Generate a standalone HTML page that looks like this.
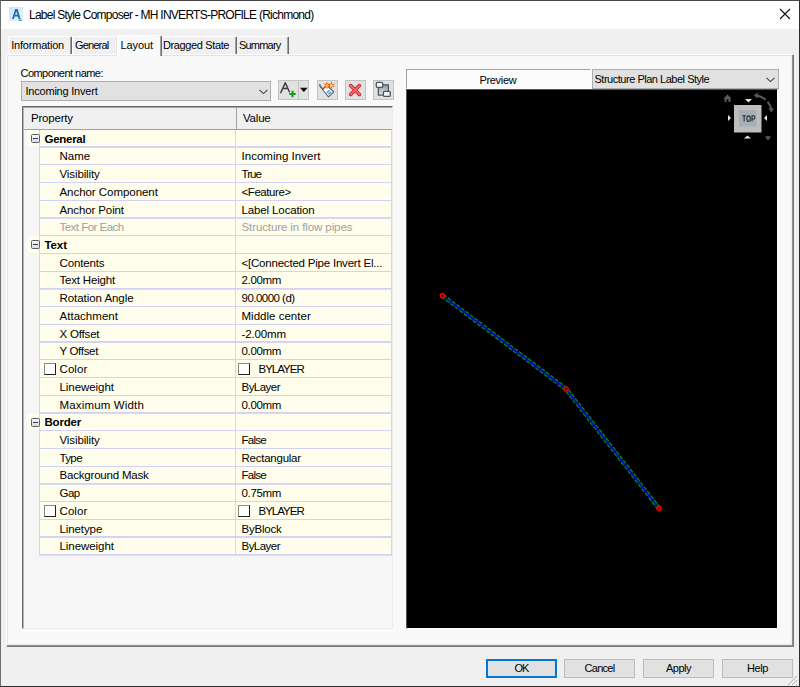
<!DOCTYPE html>
<html><head><meta charset="utf-8">
<style>
*{box-sizing:border-box;margin:0;padding:0}
html,body{width:800px;height:687px;overflow:hidden;background:#f0f0f0;font-family:"Liberation Sans",sans-serif;font-size:11px;color:#000}
.abs{position:absolute}
#win{position:absolute;left:0;top:0;width:800px;height:687px;background:#f0f0f0;overflow:hidden}
#frame{position:absolute;left:0;top:0;width:800px;height:687px;border:1px solid #2c2c2c;border-left-color:#6e6e6e;border-top-color:#484848;z-index:50;pointer-events:none}
#title{position:absolute;left:1px;top:1px;width:798px;height:28px;background:#fff}
.lbl{position:absolute;white-space:nowrap;line-height:14px;font-size:11px}
.txt{position:absolute;white-space:nowrap;line-height:14px;font-size:11.5px}
.txt.b{font-weight:bold}
.txt.dis{color:#a0a0a0}
.tab{position:absolute;top:36px;height:18px;background:#f0f0f0;border-left:1px solid #fff;border-top:1px solid #fff;border-right:1px solid #696969;box-shadow:inset -1px 0 #a0a0a0;border-radius:2px 2px 0 0;white-space:nowrap}
.tab span{position:absolute;top:1px;line-height:14px}
.tab.sel{top:35px;height:21px;background:#fafafa;z-index:3;box-shadow:inset -1px 0 #a0a0a0}
#panel{position:absolute;left:6px;top:54px;width:788px;height:593px;background:#f9f9f9;border-left:1px solid #fff;border-top:1px solid #fff;border-right:1px solid #7a7a7a;border-bottom:1px solid #7a7a7a;box-shadow:inset -1px -1px #8e8e8e, inset -3px -3px 2px -1px #ececec, inset 1px 1px #e3e3e3}
.combo{position:absolute;background:#e1e1e1;border:1px solid #adadad}
.tbtn{position:absolute;top:80px;height:20px;background:#e1e1e1;border:1px solid #c3c3c3}
.mbox{position:absolute;z-index:2;left:31px;width:9px;height:9px;border:1px solid #5a5f66;border-radius:1.5px;background:linear-gradient(#f4f4f8,#dcdde4)}
.mbox::after{content:"";position:absolute;left:1px;top:3px;width:5px;height:1px;background:#3a3a3a}
.cb{position:absolute;z-index:2;width:12px;height:12px;background:#fff;border:1px solid #222;border-top-color:#8a8a8a;border-left-color:#8a8a8a}
.btn{position:absolute;top:659px;height:19px;width:71px;background:#e1e1e1;border:1px solid #bcbcbc;text-align:center;line-height:16px;font-size:11px}
.btn.def{border:2px solid #0078d7;line-height:14px}
</style></head><body>
<div id="win">
 <div id="title">
  <svg class="abs" style="left:7px;top:5px" width="16" height="16" viewBox="0 0 16 16">
   <defs><linearGradient id="ig" x1="0" y1="0" x2="1" y2="1"><stop offset="0" stop-color="#cfe2f3"/><stop offset="1" stop-color="#eaf3fb"/></linearGradient></defs>
   <rect x="1" y="1" width="14" height="14" fill="url(#ig)"/>
   <path d="M4 13 L7.2 3 L9.6 3 L12.6 13 L10.6 13 L9.9 10.6 L6.6 10.6 L5.9 13 Z M7.1 8.8 L9.4 8.8 L8.3 5.2 Z" fill="#1f6fae"/>
   <rect x="10.5" y="13.6" width="3.5" height="1.2" fill="#2f8ad6"/>
  </svg>
  <div class="abs" style="left:28px;top:7px;font-size:12px;line-height:14px;white-space:nowrap;letter-spacing:-0.745px">Label Style Composer - MH INVERTS-PROFILE (Richmond)</div>
  <svg class="abs" style="left:778px;top:7px" width="12" height="12" viewBox="0 0 12 12"><path d="M1 1 L11 11 M11 1 L1 11" stroke="#111" stroke-width="1.1"/></svg>
 </div>

 <div class="tab" style="left:8px;width:64px"><span style="left:2.2px;letter-spacing:-0.2px">Information</span></div>
 <div class="tab" style="left:72px;width:45px;border-right:1px solid #e3e3e3;box-shadow:none"><span style="left:2px;letter-spacing:-0.833px">General</span></div>
 <div class="tab" style="left:236px;width:53px"><span style="left:2px;letter-spacing:-0.8px">Summary</span></div>
 <div class="tab" style="left:161px;width:76px"><span style="left:1px;letter-spacing:-0.375px">Dragged State</span></div>
 <div id="panel"></div>
 <div class="tab sel" style="left:117px;width:45px"><span style="left:2.5px;top:2px;letter-spacing:-0.1px">Layout</span></div>

 <div class="lbl" style="left:20.5px;top:66px;letter-spacing:-0.536px">Component name:</div>
 <div class="combo" style="left:21px;top:81px;width:250px;height:20px"><span class="lbl" style="left:3.5px;top:2px;letter-spacing:-0.214px">Incoming Invert</span>
  <svg class="abs" style="left:237px;top:7px" width="9" height="6" viewBox="0 0 9 6"><path d="M0.5 0.8 L4.5 4.6 L8.5 0.8" fill="none" stroke="#444" stroke-width="1.1"/></svg>
 </div>
 <div class="tbtn" style="left:278px;width:31px"><div class="abs" style="left:19px;top:0;width:1px;height:18px;background:#c3c3c3"></div></div>
 <div class="tbtn" style="left:317px;width:21px"></div>
 <div class="tbtn" style="left:345px;width:21px"></div>
 <div class="tbtn" style="left:373px;width:21px"></div>
 <svg class="abs" style="left:276px;top:78px" width="120" height="24" viewBox="276 78 120 24">
  <path d="M280.8 92.6 L285.3 82.8 L289.3 91.8 M283 88.6 L288 88.6" fill="none" stroke="#3a3f48" stroke-width="1.5" stroke-linecap="round" stroke-linejoin="round"/>
  <path d="M292.5 90.8 L292.5 97.2 M289.3 94 L295.7 94" stroke="#0f9f0f" stroke-width="2"/>
  <path d="M300 87.8 L307.6 87.8 L303.8 92 Z" fill="#000"/>
  <!-- tag -->
  <path d="M322.5 89.5 L327 85.5 L333.8 91.8 L328.5 96.8 Z" fill="#fbfdff" stroke="#5a6068" stroke-width="1.1" stroke-linejoin="round"/>
  <path d="M319.8 84.3 Q319.8 87.5 323.5 89" fill="none" stroke="#5f6670" stroke-width="1.6"/>
  <path d="M326.8 92.8 L329.4 90.4 M328.4 94.3 L331 91.9" stroke="#3b8ee0" stroke-width="1.4"/>
  <g fill="#f04a1a">
   <path d="M327 81.6 L327.9 84.3 L330.7 83.6 L328.6 85.4 L330.7 87.2 L327.9 86.5 L327 89.2 L326.1 86.5 L323.3 87.2 L325.4 85.4 L323.3 83.6 L326.1 84.3 Z"/>
   <path d="M331.4 81.6 L332.3 84.3 L335.1 83.6 L333 85.4 L335.1 87.2 L332.3 86.5 L331.4 89.2 L330.5 86.5 L327.7 87.2 L329.8 85.4 L327.7 83.6 L330.5 84.3 Z"/>
  </g>
  <circle cx="327" cy="85.4" r="1.5" fill="#ffc832"/>
  <circle cx="331.4" cy="85.4" r="1.5" fill="#ffd84a"/>
  <!-- red x -->
  <path d="M350.6 85.6 L359.4 94.4 M359.4 85.6 L350.6 94.4" stroke="#c42222" stroke-width="3.6" stroke-linecap="round"/>
  <path d="M350.6 85.6 L359.4 94.4 M359.4 85.6 L350.6 94.4" stroke="#f46a6a" stroke-width="2" stroke-linecap="round"/>
  <!-- layout icon -->
  <defs><linearGradient id="lg" x1="0" y1="0" x2="0" y2="1"><stop offset="0" stop-color="#8f99a6"/><stop offset="1" stop-color="#e2e6ec"/></linearGradient></defs>
  <rect x="378.5" y="84.8" width="10" height="10.4" fill="url(#lg)"/>
  <path d="M382.5 84.8 L388.4 84.8 L388.4 91.5 M378.4 87.5 L378.4 95.2 L383.5 95.2" fill="none" stroke="#50565e" stroke-width="1.3"/>
  <rect x="376.3" y="82.4" width="6.4" height="5" rx="1.2" fill="#f3f6fa" stroke="#50565e" stroke-width="1.3"/>
  <rect x="383.4" y="91.4" width="6.9" height="5" rx="1.2" fill="#f3f6fa" stroke="#50565e" stroke-width="1.3"/>
 </svg>

 <!-- property grid -->
 <div class="abs" style="left:22px;top:106px;width:371px;height:523px;background:#f6f6f6;border-left:1px solid #696969;border-top:1px solid #696969;border-right:1px solid #ececec;border-bottom:1px solid #ececec"></div>
 <div class="abs" style="left:23px;top:107px;width:369px;height:22px;background:#f0f0f0"></div>
 <div class="abs" style="left:23px;top:129px;width:369px;height:1px;background:#a0a0a0"></div>
 <div class="abs" style="left:23px;top:107px;width:369px;height:1px;background:#a8a8a8"></div>
 <div class="abs" style="left:23px;top:107px;width:1px;height:521px;background:#b4b4b4"></div>
 <div class="abs" style="left:236px;top:107px;width:1px;height:22px;background:#a0a0a0"></div>
 <span class="txt" style="left:31px;top:111px;letter-spacing:-0.2px">Property</span>
 <span class="txt" style="left:243px;top:111px;letter-spacing:-0.2px">Value</span>
<div class="abs" style="left:27px;top:130.00px;width:364px;height:16.00px;background:#fffeec"></div>
<div class="mbox" style="top:134.00px"></div>
<span class="txt b" style="left:44.5px;top:131.60px;letter-spacing:-0.283px">General</span>
<div class="abs" style="left:39px;top:146px;width:353px;height:1px;background:#d2d2f6"></div>
<div class="abs" style="left:39px;top:147px;width:353px;height:1px;background:rgba(210,210,246,0.90)"></div>
<div class="abs" style="left:40px;top:147.73px;width:351px;height:16.27px;background:#fffeec"></div>
<span class="txt" style="left:59.5px;top:149.33px;letter-spacing:0.0px">Name</span>
<span class="txt" style="left:241.5px;top:149.33px;letter-spacing:0.029px">Incoming Invert</span>
<div class="abs" style="left:39px;top:164px;width:353px;height:1px;background:#d2d2f6"></div>
<div class="abs" style="left:39px;top:165px;width:353px;height:1px;background:rgba(210,210,246,0.63)"></div>
<div class="abs" style="left:40px;top:165.46px;width:351px;height:16.54px;background:#fffeec"></div>
<span class="txt" style="left:59.5px;top:167.06px;letter-spacing:-0.111px">Visibility</span>
<span class="txt" style="left:241.5px;top:167.06px;letter-spacing:-0.933px">True</span>
<div class="abs" style="left:39px;top:182px;width:353px;height:1px;background:#d2d2f6"></div>
<div class="abs" style="left:39px;top:183px;width:353px;height:1px;background:rgba(210,210,246,0.36)"></div>
<div class="abs" style="left:40px;top:183.19px;width:351px;height:16.81px;background:#fffeec"></div>
<span class="txt" style="left:59.5px;top:184.79px;letter-spacing:-0.047px">Anchor Component</span>
<span class="txt" style="left:241.5px;top:184.79px;letter-spacing:-0.425px">&lt;Feature&gt;</span>
<div class="abs" style="left:39px;top:200px;width:353px;height:1px;background:#d2d2f6"></div>
<div class="abs" style="left:39px;top:201px;width:353px;height:1px;background:rgba(210,210,246,0.09)"></div>
<div class="abs" style="left:40px;top:200.92px;width:351px;height:16.08px;background:#fffeec"></div>
<span class="txt" style="left:59.5px;top:202.52px;letter-spacing:-0.118px">Anchor Point</span>
<span class="txt" style="left:241.5px;top:202.52px;letter-spacing:-0.123px">Label Location</span>
<div class="abs" style="left:39px;top:217px;width:353px;height:1px;background:#d2d2f6"></div>
<div class="abs" style="left:39px;top:218px;width:353px;height:1px;background:rgba(210,210,246,0.82)"></div>
<div class="abs" style="left:40px;top:218.65px;width:351px;height:16.35px;background:#fffeec"></div>
<span class="txt dis" style="left:59.5px;top:220.25px;letter-spacing:-0.525px">Text For Each</span>
<span class="txt dis" style="left:241.5px;top:220.25px;letter-spacing:-0.1px">Structure in flow pipes</span>
<div class="abs" style="left:39px;top:235px;width:353px;height:1px;background:#d2d2f6"></div>
<div class="abs" style="left:39px;top:236px;width:353px;height:1px;background:rgba(210,210,246,0.55)"></div>
<div class="abs" style="left:27px;top:236.38px;width:364px;height:16.62px;background:#fffeec"></div>
<div class="mbox" style="top:240.38px"></div>
<span class="txt b" style="left:44.5px;top:237.98px;letter-spacing:-0.1px">Text</span>
<div class="abs" style="left:39px;top:253px;width:353px;height:1px;background:#d2d2f6"></div>
<div class="abs" style="left:39px;top:254px;width:353px;height:1px;background:rgba(210,210,246,0.28)"></div>
<div class="abs" style="left:40px;top:254.11px;width:351px;height:16.89px;background:#fffeec"></div>
<span class="txt" style="left:59.5px;top:255.71px;letter-spacing:-0.157px">Contents</span>
<span class="txt" style="left:241.5px;top:255.71px;letter-spacing:-0.207px">&lt;[Connected Pipe Invert El...</span>
<div class="abs" style="left:39px;top:271px;width:353px;height:1px;background:#d2d2f6"></div>
<div class="abs" style="left:39px;top:272px;width:353px;height:1px;background:rgba(210,210,246,0.01)"></div>
<div class="abs" style="left:40px;top:271.84px;width:351px;height:16.16px;background:#fffeec"></div>
<span class="txt" style="left:59.5px;top:273.44px;letter-spacing:-0.19px">Text Height</span>
<span class="txt" style="left:241.5px;top:273.44px;letter-spacing:-0.32px">2.00mm</span>
<div class="abs" style="left:39px;top:288px;width:353px;height:1px;background:#d2d2f6"></div>
<div class="abs" style="left:39px;top:289px;width:353px;height:1px;background:rgba(210,210,246,0.74)"></div>
<div class="abs" style="left:40px;top:289.57px;width:351px;height:16.43px;background:#fffeec"></div>
<span class="txt" style="left:59.5px;top:291.17px;letter-spacing:-0.054px">Rotation Angle</span>
<span class="txt" style="left:241.5px;top:291.17px;letter-spacing:-0.52px">90.0000 (d)</span>
<div class="abs" style="left:39px;top:306px;width:353px;height:1px;background:#d2d2f6"></div>
<div class="abs" style="left:39px;top:307px;width:353px;height:1px;background:rgba(210,210,246,0.47)"></div>
<div class="abs" style="left:40px;top:307.30px;width:351px;height:16.70px;background:#fffeec"></div>
<span class="txt" style="left:59.5px;top:308.90px;letter-spacing:0.033px">Attachment</span>
<span class="txt" style="left:241.5px;top:308.90px;letter-spacing:0.017px">Middle center</span>
<div class="abs" style="left:39px;top:324px;width:353px;height:1px;background:#d2d2f6"></div>
<div class="abs" style="left:39px;top:325px;width:353px;height:1px;background:rgba(210,210,246,0.20)"></div>
<div class="abs" style="left:40px;top:325.03px;width:351px;height:15.97px;background:#fffeec"></div>
<span class="txt" style="left:59.5px;top:326.63px;letter-spacing:-0.186px">X Offset</span>
<span class="txt" style="left:241.5px;top:326.63px;letter-spacing:-0.133px">-2.00mm</span>
<div class="abs" style="left:39px;top:341px;width:353px;height:1px;background:#d2d2f6"></div>
<div class="abs" style="left:39px;top:342px;width:353px;height:1px;background:rgba(210,210,246,0.93)"></div>
<div class="abs" style="left:40px;top:342.76px;width:351px;height:16.24px;background:#fffeec"></div>
<span class="txt" style="left:59.5px;top:344.36px;letter-spacing:-0.329px">Y Offset</span>
<span class="txt" style="left:241.5px;top:344.36px;letter-spacing:-0.32px">0.00mm</span>
<div class="abs" style="left:39px;top:359px;width:353px;height:1px;background:#d2d2f6"></div>
<div class="abs" style="left:39px;top:360px;width:353px;height:1px;background:rgba(210,210,246,0.66)"></div>
<div class="abs" style="left:40px;top:360.49px;width:351px;height:16.51px;background:#fffeec"></div>
<div class="cb" style="left:44px;top:362.74px"></div>
<div class="cb" style="left:238px;top:362.74px"></div>
<span class="txt" style="left:59.5px;top:362.09px;letter-spacing:0.075px">Color</span>
<span class="txt" style="left:258.5px;top:362.09px;letter-spacing:-1.0px">BYLAYER</span>
<div class="abs" style="left:39px;top:377px;width:353px;height:1px;background:#d2d2f6"></div>
<div class="abs" style="left:39px;top:378px;width:353px;height:1px;background:rgba(210,210,246,0.39)"></div>
<div class="abs" style="left:40px;top:378.22px;width:351px;height:16.78px;background:#fffeec"></div>
<span class="txt" style="left:59.5px;top:379.82px;letter-spacing:-0.056px">Lineweight</span>
<span class="txt" style="left:241.5px;top:379.82px;letter-spacing:-0.533px">ByLayer</span>
<div class="abs" style="left:39px;top:395px;width:353px;height:1px;background:#d2d2f6"></div>
<div class="abs" style="left:39px;top:396px;width:353px;height:1px;background:rgba(210,210,246,0.12)"></div>
<div class="abs" style="left:40px;top:395.95px;width:351px;height:16.05px;background:#fffeec"></div>
<span class="txt" style="left:59.5px;top:397.55px;letter-spacing:0.158px">Maximum Width</span>
<span class="txt" style="left:241.5px;top:397.55px;letter-spacing:-0.32px">0.00mm</span>
<div class="abs" style="left:39px;top:412px;width:353px;height:1px;background:#d2d2f6"></div>
<div class="abs" style="left:39px;top:413px;width:353px;height:1px;background:rgba(210,210,246,0.85)"></div>
<div class="abs" style="left:27px;top:413.68px;width:364px;height:16.32px;background:#fffeec"></div>
<div class="mbox" style="top:417.68px"></div>
<span class="txt b" style="left:44.5px;top:415.28px;letter-spacing:-0.18px">Border</span>
<div class="abs" style="left:39px;top:430px;width:353px;height:1px;background:#d2d2f6"></div>
<div class="abs" style="left:39px;top:431px;width:353px;height:1px;background:rgba(210,210,246,0.58)"></div>
<div class="abs" style="left:40px;top:431.41px;width:351px;height:16.59px;background:#fffeec"></div>
<span class="txt" style="left:59.5px;top:433.01px;letter-spacing:-0.111px">Visibility</span>
<span class="txt" style="left:241.5px;top:433.01px;letter-spacing:-0.75px">False</span>
<div class="abs" style="left:39px;top:448px;width:353px;height:1px;background:#d2d2f6"></div>
<div class="abs" style="left:39px;top:449px;width:353px;height:1px;background:rgba(210,210,246,0.31)"></div>
<div class="abs" style="left:40px;top:449.14px;width:351px;height:16.86px;background:#fffeec"></div>
<span class="txt" style="left:59.5px;top:450.74px;letter-spacing:-0.633px">Type</span>
<span class="txt" style="left:241.5px;top:450.74px;letter-spacing:-0.24px">Rectangular</span>
<div class="abs" style="left:39px;top:466px;width:353px;height:1px;background:#d2d2f6"></div>
<div class="abs" style="left:39px;top:467px;width:353px;height:1px;background:rgba(210,210,246,0.04)"></div>
<div class="abs" style="left:40px;top:466.87px;width:351px;height:16.13px;background:#fffeec"></div>
<span class="txt" style="left:59.5px;top:468.47px;letter-spacing:-0.193px">Background Mask</span>
<span class="txt" style="left:241.5px;top:468.47px;letter-spacing:-0.75px">False</span>
<div class="abs" style="left:39px;top:483px;width:353px;height:1px;background:#d2d2f6"></div>
<div class="abs" style="left:39px;top:484px;width:353px;height:1px;background:rgba(210,210,246,0.77)"></div>
<div class="abs" style="left:40px;top:484.60px;width:351px;height:16.40px;background:#fffeec"></div>
<span class="txt" style="left:59.5px;top:486.20px;letter-spacing:-0.55px">Gap</span>
<span class="txt" style="left:241.5px;top:486.20px;letter-spacing:-0.32px">0.75mm</span>
<div class="abs" style="left:39px;top:501px;width:353px;height:1px;background:#d2d2f6"></div>
<div class="abs" style="left:39px;top:502px;width:353px;height:1px;background:rgba(210,210,246,0.50)"></div>
<div class="abs" style="left:40px;top:502.33px;width:351px;height:16.67px;background:#fffeec"></div>
<div class="cb" style="left:44px;top:504.58px"></div>
<div class="cb" style="left:238px;top:504.58px"></div>
<span class="txt" style="left:59.5px;top:503.93px;letter-spacing:0.075px">Color</span>
<span class="txt" style="left:258.5px;top:503.93px;letter-spacing:-1.0px">BYLAYER</span>
<div class="abs" style="left:39px;top:519px;width:353px;height:1px;background:#d2d2f6"></div>
<div class="abs" style="left:39px;top:520px;width:353px;height:1px;background:rgba(210,210,246,0.23)"></div>
<div class="abs" style="left:40px;top:520.06px;width:351px;height:15.94px;background:#fffeec"></div>
<span class="txt" style="left:59.5px;top:521.66px;letter-spacing:-0.1px">Linetype</span>
<span class="txt" style="left:241.5px;top:521.66px;letter-spacing:-0.2px">ByBlock</span>
<div class="abs" style="left:39px;top:536px;width:353px;height:1px;background:#d2d2f6"></div>
<div class="abs" style="left:39px;top:537px;width:353px;height:1px;background:rgba(210,210,246,0.96)"></div>
<div class="abs" style="left:40px;top:537.79px;width:351px;height:16.21px;background:#fffeec"></div>
<span class="txt" style="left:59.5px;top:539.39px;letter-spacing:-0.056px">Lineweight</span>
<span class="txt" style="left:241.5px;top:539.39px;letter-spacing:-0.533px">ByLayer</span>
<div class="abs" style="left:39px;top:554px;width:353px;height:1px;background:#d2d2f6"></div>
<div class="abs" style="left:39px;top:555px;width:353px;height:1px;background:rgba(210,210,246,0.69)"></div>
<div class="abs" style="left:39px;top:130px;width:1px;height:426px;background:#ffc8c8"></div>
<div class="abs" style="left:235px;top:130px;width:1px;height:426px;background:#ffc8c8"></div>
<div class="abs" style="left:391px;top:130px;width:1px;height:426px;background:#ffc8c8"></div>

 <!-- preview -->
 <div class="abs" style="left:406px;top:69px;width:185px;height:20px;background:#fbfbfb;border-top:1px solid #a0a0a0;border-left:1px solid #a0a0a0;border-right:1px solid #fff;border-bottom:1px solid #fff"><span class="lbl" style="left:72.5px;top:3px;letter-spacing:-0.333px">Preview</span></div>
 <div class="combo" style="left:592px;top:69px;width:187px;height:20px"><span class="lbl" style="left:1.5px;top:2px;letter-spacing:-0.48px">Structure Plan Label Style</span>
  <svg class="abs" style="left:173px;top:7px" width="9" height="6" viewBox="0 0 9 6"><path d="M0.5 0.8 L4.5 4.6 L8.5 0.8" fill="none" stroke="#444" stroke-width="1.1"/></svg>
 </div>
 <div class="abs" style="left:406px;top:89px;width:372px;height:540px;background:#000;border-left:1px solid #555;border-top:1px solid #555;border-right:1px solid #fff;border-bottom:1px solid #fff"></div>
 <svg class="abs" style="left:407px;top:90px" width="370" height="538" viewBox="407 90 370 538">
   <polyline points="442.4,295.6 566,389 659,508.4" fill="none" stroke="#00a000" stroke-width="4.2" stroke-dasharray="4 1.6"/>
   <polyline points="442.4,295.6 566,389 659,508.4" fill="none" stroke="#0010c0" stroke-width="2.2"/>
   <polyline points="442.4,295.6 566,389 659,508.4" fill="none" stroke="#000080" stroke-width="1" stroke-dasharray="2 3"/>
   <circle cx="442.4" cy="295.6" r="2.1" fill="#600000" stroke="#f00000" stroke-width="1.4"/>
   <circle cx="566" cy="389" r="2.1" fill="#600000" stroke="#f00000" stroke-width="1.4"/>
   <circle cx="659" cy="508.4" r="2.1" fill="#600000" stroke="#f00000" stroke-width="1.4"/>
   <rect x="734" y="105" width="27.5" height="27.5" fill="#bdbdbd"/>
   <rect x="739" y="110" width="17.5" height="16.5" fill="#a6aeb9"/>
   <path d="M742.3 115.8 L746 115.8 M744.15 115.8 L744.15 121.5 M752 121.5 L752 115.8 L753.6 115.8 Q754.9 115.8 754.9 117.6 Q754.9 119.2 753.6 119.2 L752 119.2" fill="none" stroke="#2e2e2e" stroke-width="1.1"/><ellipse cx="748.6" cy="118.65" rx="1.7" ry="2.75" fill="none" stroke="#2e2e2e" stroke-width="1.1"/>
   <path d="M723.5 98.5 L727.5 94.5 L731.5 98.5 L730.5 98.5 L730.5 102 L728.5 102 L728.5 99.5 L726.5 99.5 L726.5 102 L724.5 102 L724.5 98.5 Z" fill="#5a5a5a"/>
   <path d="M745 99 L752 99 L748.5 102.5 Z" fill="#e6e6e6"/>
   <path d="M744 138.5 L751 138.5 L747.5 135.5 Z" fill="#e6e6e6"/>
   <path d="M728 115 L731 118 L728 121 Z" fill="#e6e6e6"/>
   <path d="M767 115 L764 118 L767 121 Z" fill="#e6e6e6"/>
   <path d="M765 136.5 Q768 135.5 771 136.5 L768 140.5 Z" fill="#555"/>
   <path d="M756.5 95.6 A24 24 0 0 1 765.8 99.6" fill="none" stroke="#5a5a5a" stroke-width="2"/>
   <path d="M767.6 101.6 A24 24 0 0 1 771.2 108.8" fill="none" stroke="#5a5a5a" stroke-width="2"/>
   <path d="M753.8 95.2 L757.8 92.6 L757.4 98.2 Z" fill="#5a5a5a"/>
   <path d="M768.4 108.2 L774 108.6 L771.2 112.4 Z" fill="#5a5a5a"/>
 </svg>

 <div class="btn def" style="left:486px"><span style="letter-spacing:-1.0px">OK</span></div>
 <div class="btn" style="left:564px"><span style="letter-spacing:-0.72px">Cancel</span></div>
 <div class="btn" style="left:643px"><span style="letter-spacing:-0.5px">Apply</span></div>
 <div class="btn" style="left:722px"><span style="letter-spacing:-0.467px">Help</span></div>
 <svg class="abs" style="left:785px;top:673px" width="13" height="13" viewBox="0 0 13 13"><path d="M12 3 L3 12 M12 7 L7 12 M12 11 L11 12" stroke="#b0b0b0" stroke-width="1"/></svg>
 <div id="frame"></div>
</div>
</body></html>
